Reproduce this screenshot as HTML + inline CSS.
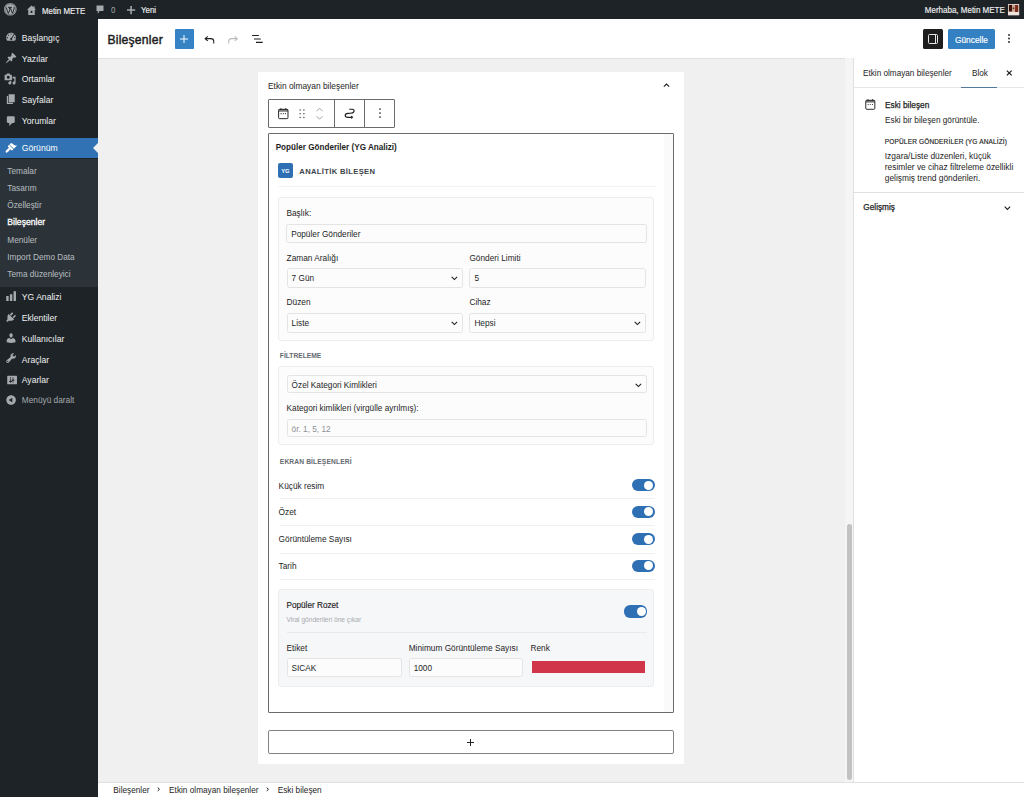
<!DOCTYPE html><html><head><meta charset="utf-8"><title>Bileşenler</title><style>
*{margin:0;padding:0;box-sizing:border-box}
html,body{width:1024px;height:797px;overflow:hidden;background:#f0f0f0;font-family:"Liberation Sans",sans-serif}
.t{position:absolute;white-space:nowrap}
.r{position:absolute}
svg{position:absolute;overflow:visible}
</style></head><body>
<div class="r" style="left:0px;top:0px;width:1024px;height:19px;background:#1d2327"></div>
<svg style="left:3.85px;top:3.25px" width="12.6" height="12.6" viewBox="0 0 20 20"><circle cx="10" cy="10" r="10" fill="#a7aaad"/><circle cx="10" cy="10" r="8.6" fill="none" stroke="#1d2327" stroke-width="0.6"/><path d="M3.2 6.8 L7 16.5 L9.3 10.6 L8 6.8 M6.6 6.8h3 M9.8 6.8 L13.4 16.5 L16 9.5 C16.5 8 16.2 7.2 15.6 6.4 M9.6 6.8h3" fill="none" stroke="#1d2327" stroke-width="1.5"/></svg>
<svg style="left:27px;top:4.9px" width="9" height="10.1" viewBox="0 0 18 20"><path d="M9 1 L0 9.5 H2.5 V20 H15.5 V9.5 H18 Z" fill="#a7aaad"/><rect x="12.5" y="2.5" width="2.8" height="5" fill="#a7aaad"/><rect x="7.2" y="11.5" width="3.6" height="4.5" fill="#1d2327"/></svg>
<div class="t" style="top:6.59px;font-size:8.4px;line-height:8.4px;font-weight:400;color:#f0f0f1;left:41.80px;-webkit-text-stroke:0.15px #f0f0f1;transform:scaleX(0.94);transform-origin:0 0">Metin METE</div>
<svg style="left:96.3px;top:5px" width="8" height="9.5" viewBox="0 0 16 19"><path d="M1 1 H15 V12 H7 L3.5 18 V12 H1 Z" fill="#a7aaad"/></svg>
<div class="t" style="top:6.39px;font-size:8.4px;line-height:8.4px;font-weight:400;color:#a7aaad;left:111.20px;transform:scaleX(0.94);transform-origin:0 0">0</div>
<svg style="left:126.8px;top:6px" width="8.2" height="8.2" viewBox="0 0 10 10"><path d="M5 0V10M0 5H10" stroke="#a7aaad" stroke-width="1.9"/></svg>
<div class="t" style="top:6.39px;font-size:8.4px;line-height:8.4px;font-weight:400;color:#f0f0f1;left:140.50px;-webkit-text-stroke:0.15px #f0f0f1;transform:scaleX(0.94);transform-origin:0 0">Yeni</div>
<div class="t" style="top:6.39px;font-size:8.4px;line-height:8.4px;font-weight:400;color:#f0f0f1;right:19.70px;-webkit-text-stroke:0.15px #f0f0f1;transform:scaleX(0.955);transform-origin:100% 0">Merhaba, Metin METE</div>
<svg style="left:1008.1px;top:3.8px" width="11.1" height="11.2" viewBox="0 0 11 11"><rect width="11" height="11" fill="#d9b8a8"/><path d="M0.6 0.8 H4.2 L4 7.5 H0.6 Z" fill="#3a1208"/><path d="M6.8 1 H10.4 V8 H7 Z" fill="#7a2a1a"/><path d="M4 1.5 C5.5 1 6.5 1.5 7 2.5 L7 6.5 C6 7.5 5 7.5 4.2 6.5 Z" fill="#caa08c"/><circle cx="5.5" cy="4.2" r="0.8" fill="#3a2018"/><path d="M0 8 H11 V11 H0 Z" fill="#efe6e2"/><rect x="0.3" y="0.3" width="10.4" height="10.4" fill="none" stroke="#e8e0dc" stroke-width="0.6"/></svg>
<div class="r" style="left:0px;top:19px;width:98px;height:778px;background:#1d2327"></div>
<div class="t" style="top:33.82px;font-size:8.6px;line-height:8.6px;font-weight:400;color:#f0f0f1;left:21.80px;">Başlangıç</div>
<div class="t" style="top:54.52px;font-size:8.6px;line-height:8.6px;font-weight:400;color:#f0f0f1;left:21.80px;">Yazılar</div>
<div class="t" style="top:75.22px;font-size:8.6px;line-height:8.6px;font-weight:400;color:#f0f0f1;left:21.80px;">Ortamlar</div>
<div class="t" style="top:96.02px;font-size:8.6px;line-height:8.6px;font-weight:400;color:#f0f0f1;left:21.80px;">Sayfalar</div>
<div class="t" style="top:117.12px;font-size:8.6px;line-height:8.6px;font-weight:400;color:#f0f0f1;left:21.80px;">Yorumlar</div>
<div class="r" style="left:0px;top:138px;width:98px;height:20.4px;background:#3072b3"></div>
<svg style="left:93px;top:143px" width="5" height="10" viewBox="0 0 5 10"><path d="M5 0 L0 5 L5 10 Z" fill="#f0f0f1"/></svg>
<div class="t" style="top:144.02px;font-size:8.6px;line-height:8.6px;font-weight:400;color:#ffffff;left:21.80px;">Görünüm</div>
<div class="r" style="left:0px;top:158.6px;width:98px;height:128px;background:#2c3338"></div>
<div class="t" style="top:167.72px;font-size:8.25px;line-height:8.25px;font-weight:400;color:rgba(240,246,252,.7);left:7.30px;">Temalar</div>
<div class="t" style="top:184.82px;font-size:8.25px;line-height:8.25px;font-weight:400;color:rgba(240,246,252,.7);left:7.30px;">Tasarım</div>
<div class="t" style="top:202.32px;font-size:8.25px;line-height:8.25px;font-weight:400;color:rgba(240,246,252,.7);left:7.30px;">Özelleştir</div>
<div class="t" style="top:218.42px;font-size:8.6px;line-height:8.6px;font-weight:400;color:#ffffff;left:7.30px;-webkit-text-stroke:0.3px #fff">Bileşenler</div>
<div class="t" style="top:236.82px;font-size:8.25px;line-height:8.25px;font-weight:400;color:rgba(240,246,252,.7);left:7.30px;">Menüler</div>
<div class="t" style="top:253.82px;font-size:8.25px;line-height:8.25px;font-weight:400;color:rgba(240,246,252,.7);left:7.30px;">Import Demo Data</div>
<div class="t" style="top:270.82px;font-size:8.25px;line-height:8.25px;font-weight:400;color:rgba(240,246,252,.7);left:7.30px;">Tema düzenleyici</div>
<div class="t" style="top:293.32px;font-size:8.6px;line-height:8.6px;font-weight:400;color:#f0f0f1;left:21.80px;">YG Analizi</div>
<div class="t" style="top:313.52px;font-size:8.6px;line-height:8.6px;font-weight:400;color:#f0f0f1;left:21.80px;">Eklentiler</div>
<div class="t" style="top:334.82px;font-size:8.6px;line-height:8.6px;font-weight:400;color:#f0f0f1;left:21.80px;">Kullanıcılar</div>
<div class="t" style="top:355.52px;font-size:8.6px;line-height:8.6px;font-weight:400;color:#f0f0f1;left:21.80px;">Araçlar</div>
<div class="t" style="top:376.22px;font-size:8.6px;line-height:8.6px;font-weight:400;color:#f0f0f1;left:21.80px;">Ayarlar</div>
<div class="t" style="top:396.47px;font-size:8.3px;line-height:8.3px;font-weight:400;color:#a7aaad;left:21.80px;">Menüyü daralt</div>
<svg style="left:5.2px;top:31.4px" width="12.2" height="12.2" viewBox="0 0 20 20"><path d="M3.76 16h12.48c1.1-1.37 1.76-3.11 1.76-5 0-4.42-3.58-8-8-8s-8 3.58-8 8c0 1.890.66 3.63 1.76 5z M10 4c.55 0 1 .45 1 1s-.45 1-1 1-1-.45-1-1 .45-1 1-1z M6 6c.55 0 1 .45 1 1s-.45 1-1 1-1-.45-1-1 .45-1 1-1z M14.69 4.47l1.3.76-4.33 6.77c.2.28.34.61.34.99 0 .97-.78 1.75-1.75 1.75S8.5 13.97 8.5 13c0-.96.78-1.75 1.75-1.75.08 0 .15.01.22.02z M4 10c.55 0 1 .45 1 1s-.45 1-1 1-1-.45-1-1 .45-1 1-1z M16 10c.55 0 1 .45 1 1s-.45 1-1 1-1-.45-1-1 .45-1 1-1z" fill="#a7aaad" fill-rule="evenodd"/></svg>
<svg style="left:4.6px;top:51.8px" width="12.2" height="12.2" viewBox="0 0 20 20"><path d="M10.44 3.02l1.82-1.82 6.36 6.35-1.830 1.82c-1.05-.68-2.48-.57-3.41.36l-.75.75c-.92.93-1.04 2.35-.35 3.41l-1.83 1.82-2.41-2.41-2.8 2.79c-.42.42-3.38 2.71-3.8 2.29s1.86-3.39 2.28-3.81l2.79-2.79L4.1 9.36l1.83-1.82c1.05.69 2.48.57 3.4-.36l.75-.75c.93-.92 1.05-2.35.36-3.41z" fill="#a7aaad"/></svg>
<svg style="left:4.4px;top:73.2px" width="12.2" height="12.2" viewBox="0 0 20 20"><path d="M13 11V4c0-.55-.45-1-1-1h-1.67L9 1H5L3.67 3H2c-.55 0-1 .45-1 1v7c0 .55.45 1 1 1h10c.55 0 1-.45 1-1z M7 4.5c1.38 0 2.5 1.12 2.5 2.5S8.38 9.5 7 9.5 4.5 8.38 4.5 7 5.62 4.5 7 4.5z M14 6h5v10.5c0 1.38-1.12 2.5-2.5 2.5S14 17.880 14 16.5s1.12-2.5 2.5-2.5c.17 0 .34.02.5.05V9h-3V6z M10 14.05V13h2v3.5c0 1.38-1.12 2.5-2.5 2.5S7 17.88 7 16.5 8.12 14 9.5 14c.17 0 .34.02.5.05z" fill="#a7aaad" fill-rule="evenodd"/></svg>
<svg style="left:4.5px;top:93.3px" width="12.2" height="12.2" viewBox="0 0 20 20"><path d="M6 15V2h10v13H6z M5 16h8v2H3V5h2v11z" fill="#a7aaad"/></svg>
<svg style="left:4.5px;top:114.6px" width="12.2" height="12.2" viewBox="0 0 20 20"><path d="M5 2h9c1.1 0 2 .9 2 2v7c0 1.1-.9 2-2 2h-2l-5 5v-5H5c-1.1 0-2-.9-2-2V4c0-1.1.9-2 2-2z" fill="#a7aaad"/></svg>
<svg style="left:4.9px;top:141.5px" width="12.2" height="12.2" viewBox="0 0 20 20"><path d="M14.48 11.06L7.41 3.99l1.5-1.5c.5-.56 2.3-.47 3.51.32 1.21.8 1.43 1.28 2.91 2.1 1.18.64 2.45 1.26 4.45.85z M13.77 11.77L6.7 4.7 4.93 6.47c-.39.39-.39 1.02 0 1.41l1.060 1.06c.39.39.39 1.03 0 1.42-.6.6-1.43 1.11-2.21 1.69-.35.26-.7.53-1.01.84C1.43 14.23.4 16.08 1.4 17.07c.99 1 2.84-.03 4.18-1.36.31-.31.58-.66.85-1.02.57-.78 1.08-1.61 1.69-2.21.39-.39 1.02-.39 1.41 0l1.06 1.06c.39.39 1.020.39 1.41 0z" fill="#fff"/></svg>
<svg style="left:4.8px;top:290.1px" width="12.2" height="12.2" viewBox="0 0 20 20"><path d="M18 18V2h-4v16h4z M12 18V7H8v11h4z M6 18v-8H2v8h4z" fill="#a7aaad"/></svg>
<svg style="left:4.8px;top:311.2px" width="12.2" height="12.2" viewBox="0 0 20 20"><path d="M13.11 4.36L9.87 7.6 8 5.73l3.24-3.24c.35-.34 1.05-.2 1.56.32.52.51.66 1.21.31 1.55z M5.11 6.13l.91-1.12 9.01 9.01-1.19.84c-.71.71-2.63 1.16-3.82 1.16H6.14L4.9 17.26c-.59.59-1.54.59-2.12 0-.59-.58-.59-1.53 0-2.12l1.24-1.24v-3.88c0-1.13.4-3.19 1.09-3.89z M12.37 10.1l3.24-3.24c.34-.35 1.04-.21 1.55.31.52.51.66 1.21.31 1.55l-3.24 3.25z" fill="#a7aaad"/></svg>
<svg style="left:4.7px;top:331.8px" width="12.2" height="12.2" viewBox="0 0 20 20"><path d="M10 9.25c-2.27 0-2.73-3.44-2.73-3.44C7 4.02 7.82 2 9.97 2c2.16 0 2.98 2.02 2.71 3.81 0 0-.41 3.44-2.68 3.44z M10 11.82L12.72 10c2.39 0 4.52 2.33 4.52 4.53v2.49s-3.65 1.13-7.24 1.13c-3.65 0-7.24-1.13-7.24-1.13v-2.49c0-2.25 1.94-4.48 4.47-4.48z" fill="#a7aaad"/></svg>
<svg style="left:4.8px;top:352.3px" width="12.2" height="12.2" viewBox="0 0 20 20"><path d="M16.68 9.77c-1.34 1.34-3.3 1.67-4.95.99l-5.41 6.52c-.99.99-2.59.99-3.58 0s-.99-2.59 0-3.57l6.52-5.42c-.68-1.65-.35-3.61.99-4.95 1.28-1.28 3.12-1.62 4.72-1.06l-2.89 2.89 2.82 2.82 2.86-2.87c.53 1.58.18 3.39-1.08 4.65z M3.81 16.21c.4.39 1.04.39 1.43 0 .4-.4.4-1.04 0-1.43-.39-.4-1.03-.4-1.43 0-.39.39-.39 1.03 0 1.43z" fill="#a7aaad" fill-rule="evenodd"/></svg>
<svg style="left:5.6px;top:373.5px" width="12.2" height="12.2" viewBox="0 0 20 20"><path d="M18 16V4c0-.55-.45-1-1-1H3c-.55 0-1 .45-1 1v12c0 .55.45 1 1 1h14c.55 0 1-.45 1-1z M8 11h1c.55 0 1 .45 1 1s-.45 1-1 1H8v1.5c0 .28-.22.5-.5.5s-.5-.22-.5-.5V13H6c-.55 0-1-.45-1-1s.45-1 1-1h1V5.5c0-.28.22-.5.5-.5s.5.22.5.5V11z M13 9h-1V5.5c0-.28-.22-.5-.5-.5s-.5.22-.5.5V9h-1c-.55 0-1 .45-1 1s.45 1 1 1h1v3.5c0 .28.22.5.5.5s.5-.22.5-.5V11h1c.55 0 1-.45 1-1s-.45-1-1-1z" fill="#a7aaad" fill-rule="evenodd"/></svg>
<svg style="left:4.7px;top:394.3px" width="12.2" height="12.2" viewBox="0 0 20 20"><path d="M10 2.16c4.33 0 7.84 3.51 7.84 7.84s-3.51 7.84-7.84 7.84S2.16 14.33 2.16 10 5.710 2.16 10 2.16z M12 13.88V6.12L6.18 9.97z" fill="#a7aaad" fill-rule="evenodd"/></svg>
<div class="r" style="left:98px;top:19px;width:926px;height:39.6px;background:#fff;border-bottom:1px solid #e0e0e0"></div>
<div class="t" style="top:33.87px;font-size:12.2px;line-height:12.2px;font-weight:400;color:#1e1e1e;left:107.40px;letter-spacing:0.2px;-webkit-text-stroke:0.45px #1e1e1e">Bileşenler</div>
<div class="r" style="left:174.7px;top:29.1px;width:19.5px;height:19.5px;background:#3582c4;border-radius:1px"></div>
<svg style="left:179.4px;top:33.8px" width="10" height="10" viewBox="0 0 10 10"><path d="M5 1V9M1 5H9" stroke="#fff" stroke-width="1.0"/></svg>
<svg style="left:203.7px;top:35.5px" width="10.5" height="7.5" viewBox="0 0 14 10"><path d="M13 10 V7 C13 4.5 11.5 3.5 9 3.5 H2 M5 0.5 L1.5 3.5 L5 6.5" fill="none" stroke="#1e1e1e" stroke-width="1.4"/></svg>
<svg style="left:228px;top:35.5px" width="10.5" height="7.5" viewBox="0 0 14 10"><path d="M1 10 V7 C1 4.5 2.5 3.5 5 3.5 H12 M9 0.5 L12.5 3.5 L9 6.5" fill="none" stroke="#bbb" stroke-width="1.4"/></svg>
<svg style="left:251.5px;top:35px" width="12" height="8.5" viewBox="0 0 14 10"><path d="M0 0.6H8 M2.3 4.6H10.3 M4.6 8.7H12.6" stroke="#1e1e1e" stroke-width="1.25"/></svg>
<div class="r" style="left:923.2px;top:29.1px;width:19.8px;height:19.6px;background:#1e1e1e;border-radius:1.5px"></div>
<div class="r" style="left:928.2px;top:33.7px;width:10.3px;height:10.2px;border:1.1px solid #e6e6e6;border-radius:1.5px"></div>
<div class="r" style="left:934.6px;top:33.7px;width:1.1px;height:10.2px;background:#e6e6e6"></div>
<div class="r" style="left:948px;top:29.1px;width:46.8px;height:19.6px;background:#3380c2;border-radius:1.5px"></div>
<div class="t" style="top:35.52px;font-size:8.6px;line-height:8.6px;font-weight:400;color:#fff;left:955.40px;-webkit-text-stroke:0.15px #fff;transform:scaleX(0.97);transform-origin:0 0">Güncelle</div>
<svg style="left:1008.3px;top:34.2px" width="2" height="9" viewBox="0 0 2 9"><circle cx="1" cy="1" r="0.9" fill="#1e1e1e"/><circle cx="1" cy="4.5" r="0.9" fill="#1e1e1e"/><circle cx="1" cy="8" r="0.9" fill="#1e1e1e"/></svg>
<div class="r" style="left:845px;top:58px;width:8px;height:724px;background:#f5f5f5"></div>
<div class="r" style="left:846.6px;top:524px;width:5.3px;height:255.5px;background:#c2c2c2;border-radius:3px"></div>
<div class="r" style="left:258px;top:71.6px;width:425.5px;height:392.4px;background:#fff"></div>
<div class="r" style="left:258px;top:464px;width:425.5px;height:300px;background:#fff"></div>
<div class="t" style="top:81.89px;font-size:8.4px;line-height:8.4px;font-weight:400;color:#1e1e1e;left:268.00px;">Etkin olmayan bileşenler</div>
<svg style="left:662.8px;top:82.5px" width="7" height="4" viewBox="0 0 10 6"><path d="M1 5.5 L5 1.5 L9 5.5" fill="none" stroke="#1e1e1e" stroke-width="1.6"/></svg>
<div class="r" style="left:268.3px;top:98.7px;width:126.6px;height:29.1px;border:1px solid #6b6b6b;border-radius:1px;background:#fff"></div>
<div class="r" style="left:334px;top:98.7px;width:1px;height:29.1px;background:#6b6b6b"></div>
<div class="r" style="left:364.3px;top:98.7px;width:1px;height:29.1px;background:#6b6b6b"></div>
<svg style="left:277.9px;top:107.8px" width="10.6" height="11.2" viewBox="0 0 14 15"><rect x="0.7" y="1.8" width="12.6" height="12.5" rx="1.4" fill="none" stroke="#1e1e1e" stroke-width="1.3"/><rect x="0.7" y="1.8" width="12.6" height="3.2" fill="#1e1e1e" fill-opacity="0.6"/><path d="M3 0.2 L4.5 0.2 L4.5 2 L3 2 Z M9.5 0.2 L11 0.2 L11 2 L9.5 2 Z" fill="#1e1e1e"/><circle cx="4" cy="7.6" r="0.75" fill="#1e1e1e"/><circle cx="7" cy="7.6" r="0.75" fill="#1e1e1e"/><circle cx="10" cy="7.6" r="0.75" fill="#1e1e1e"/></svg>
<svg style="left:299px;top:108.7px" width="6" height="9.5" viewBox="0 0 6 10"><g fill="#444"><circle cx="1" cy="1" r="0.75"/><circle cx="5" cy="1" r="0.75"/><circle cx="1" cy="5" r="0.75"/><circle cx="5" cy="5" r="0.75"/><circle cx="1" cy="9" r="0.75"/><circle cx="5" cy="9" r="0.75"/></g></svg>
<svg style="left:316.4px;top:106.6px" width="7" height="13.4" viewBox="0 0 7 13"><path d="M0.5 4 L3.5 1 L6.5 4 M0.5 9 L3.5 12 L6.5 9" fill="none" stroke="#8a8a8a" stroke-width="0.8"/></svg>
<svg style="left:344px;top:108px" width="12" height="12" viewBox="0 0 12 12"><path d="M5.2 1.2 H8.2 C9.8 1.2 10.6 2.6 9.8 3.9 C9.2 4.9 8.2 5.2 6.5 5.3 L4 5.4 C2.2 5.5 1.2 6.4 1.2 7.5 C1.2 8.6 2.3 9.3 4 9.3 H7.6" fill="none" stroke="#1e1e1e" stroke-width="1.15"/><path d="M7.1 7.5 L9.4 9.3 L7.1 11.1 Z" fill="#1e1e1e"/></svg>
<svg style="left:379px;top:108.2px" width="2" height="10" viewBox="0 0 2 10"><circle cx="1" cy="1" r="0.85" fill="#1e1e1e"/><circle cx="1" cy="5" r="0.85" fill="#1e1e1e"/><circle cx="1" cy="9" r="0.85" fill="#1e1e1e"/></svg>
<div class="r" style="left:268.3px;top:133px;width:405.4px;height:580px;border:1px solid #6b6b6b;border-radius:1px;background:#fff"></div>
<div class="r" style="left:664.2px;top:134px;width:9px;height:578px;background:#fafafa"></div>
<div class="t" style="top:143.60px;font-size:8.15px;line-height:8.15px;font-weight:700;color:#1e1e1e;left:275.70px;">Popüler Gönderiler (YG Analizi)</div>
<div class="r" style="left:277.9px;top:163.2px;width:15.1px;height:14.8px;background:#2f6fb3;border-radius:2px"></div>
<div class="t" style="top:169.09px;font-size:5.8px;line-height:5.8px;font-weight:700;color:#fff;left:0.00px;left:277.9px;width:15.1px;text-align:center">YG</div>
<div class="t" style="top:168.37px;font-size:7.6px;line-height:7.6px;font-weight:700;color:#3c434a;left:299.30px;letter-spacing:0.35px;">ANALİTİK BİLEŞEN</div>
<div class="r" style="left:278px;top:186.2px;width:378px;height:1px;background:#f3f3f3"></div>
<div class="r" style="left:278.2px;top:196.8px;width:376px;height:144px;background:#fcfcfc;border:1px solid #ececec;border-radius:3px"></div>
<div class="t" style="top:209.17px;font-size:8.3px;line-height:8.3px;font-weight:400;color:#1e1e1e;left:286.40px;">Başlık:</div>
<div class="r" style="left:286.2px;top:224.0px;width:360.4px;height:19.2px;background:#fcfcfc;border:1px solid #e4e4e4;border-radius:2.5px"></div>
<div class="t" style="top:231.22px;font-size:8.25px;line-height:8.25px;font-weight:400;color:#1e1e1e;left:291.20px;">Popüler Gönderiler</div>
<div class="t" style="top:254.27px;font-size:8.3px;line-height:8.3px;font-weight:400;color:#1e1e1e;left:286.60px;">Zaman Aralığı</div>
<div class="t" style="top:254.27px;font-size:8.3px;line-height:8.3px;font-weight:400;color:#1e1e1e;left:469.40px;">Gönderi Limiti</div>
<div class="r" style="left:286.6px;top:268.2px;width:176.6px;height:19.4px;background:#fcfcfc;border:1px solid #e4e4e4;border-radius:2.5px"></div>
<div class="t" style="top:275.42px;font-size:8.25px;line-height:8.25px;font-weight:400;color:#1e1e1e;left:291.60px;">7 Gün</div>
<svg style="left:451.20000000000005px;top:276.2px" width="6.8" height="4.4" viewBox="0 0 10 6"><path d="M1 1 L5 5 L9 1" fill="none" stroke="#1e1e1e" stroke-width="1.6"/></svg>
<div class="r" style="left:469.4px;top:268.2px;width:177px;height:19.4px;background:#fcfcfc;border:1px solid #e4e4e4;border-radius:2.5px"></div>
<div class="t" style="top:275.42px;font-size:8.25px;line-height:8.25px;font-weight:400;color:#1e1e1e;left:474.40px;">5</div>
<div class="t" style="top:298.47px;font-size:8.3px;line-height:8.3px;font-weight:400;color:#1e1e1e;left:286.60px;">Düzen</div>
<div class="t" style="top:298.47px;font-size:8.3px;line-height:8.3px;font-weight:400;color:#1e1e1e;left:469.40px;">Cihaz</div>
<div class="r" style="left:286.6px;top:313.2px;width:176.6px;height:19.4px;background:#fcfcfc;border:1px solid #e4e4e4;border-radius:2.5px"></div>
<div class="t" style="top:320.42px;font-size:8.25px;line-height:8.25px;font-weight:400;color:#1e1e1e;left:291.60px;">Liste</div>
<svg style="left:451.20000000000005px;top:321.2px" width="6.8" height="4.4" viewBox="0 0 10 6"><path d="M1 1 L5 5 L9 1" fill="none" stroke="#1e1e1e" stroke-width="1.6"/></svg>
<div class="r" style="left:469.4px;top:313.2px;width:177px;height:19.4px;background:#fcfcfc;border:1px solid #e4e4e4;border-radius:2.5px"></div>
<div class="t" style="top:320.42px;font-size:8.25px;line-height:8.25px;font-weight:400;color:#1e1e1e;left:474.40px;">Hepsi</div>
<svg style="left:634.4px;top:321.2px" width="6.8" height="4.4" viewBox="0 0 10 6"><path d="M1 1 L5 5 L9 1" fill="none" stroke="#1e1e1e" stroke-width="1.6"/></svg>
<div class="t" style="top:352.73px;font-size:6.7px;line-height:6.7px;font-weight:700;color:#646970;left:279.80px;letter-spacing:0.0px;">FİLTRELEME</div>
<div class="r" style="left:278.2px;top:366.4px;width:376px;height:79px;background:#fcfcfc;border:1px solid #ececec;border-radius:3px"></div>
<div class="r" style="left:286.6px;top:374.6px;width:360px;height:18.8px;background:#fcfcfc;border:1px solid #e4e4e4;border-radius:2.5px"></div>
<div class="t" style="top:381.82px;font-size:8.25px;line-height:8.25px;font-weight:400;color:#1e1e1e;left:291.60px;">Özel Kategori Kimlikleri</div>
<svg style="left:634.6px;top:382.6px" width="6.8" height="4.4" viewBox="0 0 10 6"><path d="M1 1 L5 5 L9 1" fill="none" stroke="#1e1e1e" stroke-width="1.6"/></svg>
<div class="t" style="top:405.12px;font-size:8.25px;line-height:8.25px;font-weight:400;color:#1e1e1e;left:286.60px;">Kategori kimlikleri (virgülle ayrılmış):</div>
<div class="r" style="left:286.6px;top:418.7px;width:360px;height:18.8px;background:#fcfcfc;border:1px solid #e4e4e4;border-radius:2.5px"></div>
<div class="t" style="top:425.92px;font-size:8.25px;line-height:8.25px;font-weight:400;color:#8c8f94;left:291.60px;">ör. 1, 5, 12</div>
<div class="t" style="top:458.53px;font-size:6.7px;line-height:6.7px;font-weight:700;color:#646970;left:279.80px;letter-spacing:0.12px;">EKRAN BİLEŞENLERİ</div>
<div class="t" style="top:481.57px;font-size:8.3px;line-height:8.3px;font-weight:400;color:#1e1e1e;left:278.60px;">Küçük resim</div>
<div class="r" style="left:632.2px;top:479px;width:22.5px;height:12.2px;background:#2f6fb3;border-radius:6.1px"></div>
<div class="r" style="left:644.4000000000001px;top:480.6px;width:9px;height:9px;background:#fff;border-radius:50%"></div>
<div class="r" style="left:279.8px;top:498.2px;width:375px;height:1px;background:#f0f0f0"></div>
<div class="t" style="top:508.47px;font-size:8.3px;line-height:8.3px;font-weight:400;color:#1e1e1e;left:278.60px;">Özet</div>
<div class="r" style="left:632.2px;top:505.8px;width:22.5px;height:12.2px;background:#2f6fb3;border-radius:6.1px"></div>
<div class="r" style="left:644.4000000000001px;top:507.40000000000003px;width:9px;height:9px;background:#fff;border-radius:50%"></div>
<div class="r" style="left:279.8px;top:525.4px;width:375px;height:1px;background:#f0f0f0"></div>
<div class="t" style="top:535.27px;font-size:8.3px;line-height:8.3px;font-weight:400;color:#1e1e1e;left:278.60px;">Görüntüleme Sayısı</div>
<div class="r" style="left:632.2px;top:532.9px;width:22.5px;height:12.2px;background:#2f6fb3;border-radius:6.1px"></div>
<div class="r" style="left:644.4000000000001px;top:534.5px;width:9px;height:9px;background:#fff;border-radius:50%"></div>
<div class="r" style="left:279.8px;top:552.5px;width:375px;height:1px;background:#f0f0f0"></div>
<div class="t" style="top:562.37px;font-size:8.3px;line-height:8.3px;font-weight:400;color:#1e1e1e;left:278.60px;">Tarih</div>
<div class="r" style="left:632.2px;top:559.8px;width:22.5px;height:12.2px;background:#2f6fb3;border-radius:6.1px"></div>
<div class="r" style="left:644.4000000000001px;top:561.4px;width:9px;height:9px;background:#fff;border-radius:50%"></div>
<div class="r" style="left:279.8px;top:579.2px;width:375px;height:1px;background:#f0f0f0"></div>
<div class="r" style="left:278.2px;top:589.3px;width:376px;height:97.4px;background:#f6f7f9;border:1px solid #ececec;border-radius:3px"></div>
<div class="t" style="top:601.86px;font-size:8.2px;line-height:8.2px;font-weight:400;color:#1e1e1e;left:286.50px;-webkit-text-stroke:0.15px #1e1e1e">Popüler Rozet</div>
<div class="t" style="top:616.91px;font-size:6.6px;line-height:6.6px;font-weight:400;color:#a7aaad;left:286.50px;">Viral gönderileri öne çıkar</div>
<div class="r" style="left:624.3px;top:605.4px;width:22.5px;height:12.2px;background:#2f6fb3;border-radius:6.1px"></div>
<div class="r" style="left:636.5px;top:607.0px;width:9px;height:9px;background:#fff;border-radius:50%"></div>
<div class="r" style="left:286.5px;top:632px;width:360px;height:1px;background:#eaeaea"></div>
<div class="t" style="top:643.77px;font-size:8.3px;line-height:8.3px;font-weight:400;color:#1e1e1e;left:286.50px;">Etiket</div>
<div class="t" style="top:643.77px;font-size:8.3px;line-height:8.3px;font-weight:400;color:#1e1e1e;left:408.70px;">Minimum Görüntüleme Sayısı</div>
<div class="t" style="top:643.77px;font-size:8.3px;line-height:8.3px;font-weight:400;color:#1e1e1e;left:530.50px;">Renk</div>
<div class="r" style="left:286.5px;top:658.2px;width:115.3px;height:19px;background:#fcfcfc;border:1px solid #e4e4e4;border-radius:2.5px"></div>
<div class="t" style="top:665.42px;font-size:8.25px;line-height:8.25px;font-weight:400;color:#1e1e1e;left:291.50px;">SICAK</div>
<div class="r" style="left:408.7px;top:658.2px;width:114.7px;height:19px;background:#fcfcfc;border:1px solid #e4e4e4;border-radius:2.5px"></div>
<div class="t" style="top:665.42px;font-size:8.25px;line-height:8.25px;font-weight:400;color:#1e1e1e;left:413.70px;">1000</div>
<div class="r" style="left:531.5px;top:660.6px;width:113.7px;height:12.9px;background:#d0354a"></div>
<div class="r" style="left:267.9px;top:730.3px;width:406px;height:24px;border:1px solid #828282;border-radius:2px;background:#fff"></div>
<svg style="left:467.2px;top:738.6px" width="7" height="7" viewBox="0 0 10 10"><path d="M5 0V10M0 5H10" stroke="#1e1e1e" stroke-width="1.4"/></svg>
<div class="r" style="left:853px;top:58px;width:171px;height:724px;background:#fff;border-left:1px solid #e0e0e0"></div>
<div class="t" style="top:69.56px;font-size:8.2px;line-height:8.2px;font-weight:400;color:#1e1e1e;left:863.00px;">Etkin olmayan bileşenler</div>
<div class="t" style="top:69.56px;font-size:8.2px;line-height:8.2px;font-weight:400;color:#1e1e1e;left:972.00px;">Blok</div>
<div class="r" style="left:854px;top:87.3px;width:170px;height:1px;background:#e6e6e6"></div>
<div class="r" style="left:961.3px;top:86.5px;width:35.4px;height:1.4px;background:#50799c"></div>
<svg style="left:1006px;top:70.3px" width="6.5" height="6" viewBox="0 0 10 10"><path d="M1 1L9 9M9 1L1 9" stroke="#1e1e1e" stroke-width="2.1"/></svg>
<svg style="left:864.8px;top:99px" width="10.6" height="10.8" viewBox="0 0 14 15"><rect x="0.7" y="1.8" width="12.6" height="12.5" rx="1.4" fill="none" stroke="#1e1e1e" stroke-width="1.3"/><rect x="0.7" y="1.8" width="12.6" height="3.2" fill="#1e1e1e" fill-opacity="0.6"/><path d="M3 0.2 L4.5 0.2 L4.5 2 L3 2 Z M9.5 0.2 L11 0.2 L11 2 L9.5 2 Z" fill="#1e1e1e"/><circle cx="4" cy="7.6" r="0.75" fill="#1e1e1e"/><circle cx="7" cy="7.6" r="0.75" fill="#1e1e1e"/><circle cx="10" cy="7.6" r="0.75" fill="#1e1e1e"/></svg>
<div class="t" style="top:101.37px;font-size:8.3px;line-height:8.3px;font-weight:400;color:#1e1e1e;left:885.00px;-webkit-text-stroke:0.25px #1e1e1e">Eski bileşen</div>
<div class="t" style="top:116.72px;font-size:8.25px;line-height:8.25px;font-weight:400;color:#1e1e1e;left:885.00px;">Eski bir bileşen görüntüle.</div>
<div class="t" style="top:138.70px;font-size:6.5px;line-height:6.5px;font-weight:400;color:#1e1e1e;left:884.80px;letter-spacing:0.16px;-webkit-text-stroke:0.15px #1e1e1e">POPÜLER GÖNDERİLER (YG ANALİZİ)</div>
<div class="t" style="top:151.79px;font-size:8.4px;line-height:8.4px;font-weight:400;color:#1e1e1e;left:884.80px;">Izgara/Liste düzenleri, küçük</div>
<div class="t" style="top:163.19px;font-size:8.4px;line-height:8.4px;font-weight:400;color:#1e1e1e;left:884.80px;">resimler ve cihaz filtreleme özellikli</div>
<div class="t" style="top:174.39px;font-size:8.4px;line-height:8.4px;font-weight:400;color:#1e1e1e;left:884.80px;">gelişmiş trend gönderileri.</div>
<div class="r" style="left:854px;top:192px;width:170px;height:1px;background:#e0e0e0"></div>
<div class="t" style="top:203.82px;font-size:8.25px;line-height:8.25px;font-weight:400;color:#1e1e1e;left:863.30px;-webkit-text-stroke:0.25px #1e1e1e">Gelişmiş</div>
<svg style="left:1003.8px;top:205.7px" width="6.8" height="4.2" viewBox="0 0 10 6"><path d="M1 1 L5 5 L9 1" fill="none" stroke="#1e1e1e" stroke-width="1.6"/></svg>
<div class="r" style="left:98px;top:781.6px;width:926px;height:15.4px;background:#fff;border-top:1px solid #e0e0e0"></div>
<div class="t" style="top:787.32px;font-size:8.25px;line-height:8.25px;font-weight:400;color:#1e1e1e;left:113.30px;">Bileşenler</div>
<svg style="left:157.4px;top:787.4px" width="3.2" height="4.6" viewBox="0 0 4 6"><path d="M0.8 0.8 L3.2 3 L0.8 5.2" fill="none" stroke="#1e1e1e" stroke-width="1.3"/></svg>
<div class="t" style="top:787.32px;font-size:8.25px;line-height:8.25px;font-weight:400;color:#1e1e1e;left:169.10px;">Etkin olmayan bileşenler</div>
<svg style="left:266.2px;top:787.4px" width="3.2" height="4.6" viewBox="0 0 4 6"><path d="M0.8 0.8 L3.2 3 L0.8 5.2" fill="none" stroke="#1e1e1e" stroke-width="1.3"/></svg>
<div class="t" style="top:787.32px;font-size:8.25px;line-height:8.25px;font-weight:400;color:#1e1e1e;left:277.70px;">Eski bileşen</div>
</body></html>
